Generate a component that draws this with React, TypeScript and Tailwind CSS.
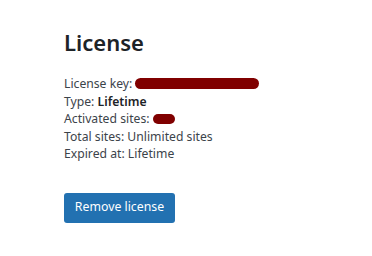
const Redacted = ({ className }: { className: string }) => (
    <span className={`inline-block rounded-full bg-[#800000] align-middle ${className}`} />
);

const App = () => {
    return (
        <div className="min-h-screen w-[372px] h-[256px] bg-white font-['Noto_Sans',sans-serif] text-[#3c434a]">
            <div className="pl-[64px] pt-[28px]">
                <h1 className="text-[22px] font-semibold leading-[28px] text-[#1d2327]">License</h1>

                <div className="mt-[19px] text-[12.2px] leading-[17.5px]">
                    <p>
                        License key: <Redacted className="w-[124px] h-[11px] -mt-[2px]" />
                    </p>
                    <p>
                        Type: <span className="font-semibold text-[#1d2327]">Lifetime</span>
                    </p>
                    <p>
                        Activated sites: <Redacted className="w-[22px] h-[10px] -mt-[2px]" />
                    </p>
                    <p>Total sites: Unlimited sites</p>
                    <p>Expired at: Lifetime</p>
                </div>

                <button
                    type="button"
                    className="mt-[30px] h-[30px] w-[111px] rounded-[3px] bg-[#2271b1] text-[12.3px] text-white"
                >
                    Remove license
                </button>
            </div>
        </div>
    );
};

export default App;
